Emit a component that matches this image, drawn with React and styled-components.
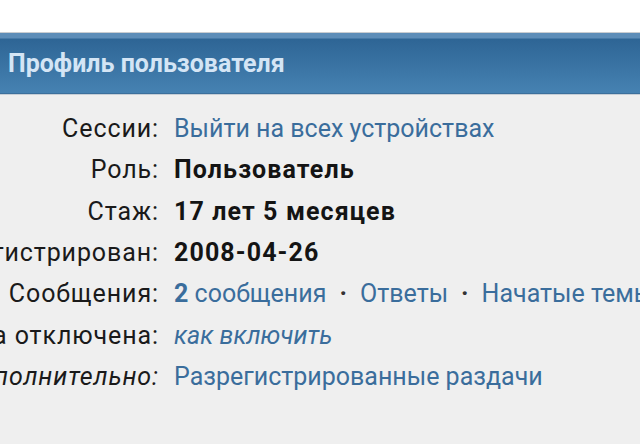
import React from "react";
import styled, { createGlobalStyle } from "styled-components";

const Global = createGlobalStyle`
  html, body {
    margin: 0;
    padding: 0;
    background: #efefef;
    overflow: hidden;
  }
  body {
    font-family: Roboto, "Noto Sans", sans-serif;
    color: #1a1a1a;
  }
`;

const Page = styled.div`
  width: 640px;
  height: 444px;
  overflow: hidden;
  background: #efefef;
`;

const TopSpace = styled.div`
  height: 32px;
  background: #ffffff;
  border-bottom: 1px solid #c9cdd1;
`;

const Header = styled.div`
  height: 60px;
  display: flex;
  align-items: center;
  padding-left: 8px;
  background: linear-gradient(
    to bottom,
    #5d8db8 0px,
    #5d8db8 5px,
    #2e6595 6px,
    #4682b2 100%
  );
  border-bottom: 1px solid #3b6f9c;
  box-shadow: 0 1px 0 #c6ced6;
  font-size: 25px;
  font-weight: 700;
  color: #d4e5f5;
`;

const Table = styled.div`
  display: grid;
  grid-template-columns: 159px 1fr;
  column-gap: 15px;
  padding-top: 14px;
`;

const Label = styled.div`
  display: flex;
  justify-content: flex-end;
  white-space: nowrap;
  height: 41.3px;
  align-items: center;
  font-size: 25px;
  letter-spacing: 0.9px;
  color: #1a1a1a;
  font-style: ${(p) => (p.$italic ? "italic" : "normal")};
`;

const Value = styled.div`
  display: flex;
  align-items: center;
  white-space: nowrap;
  height: 41.3px;
  font-size: 25px;
  font-weight: ${(p) => (p.$bold ? 700 : 400)};
  letter-spacing: ${(p) => (p.$bold ? "1.1px" : "0")};
  color: #141414;
`;

const Link = styled.span`
  color: #3a6d9c;
  font-style: ${(p) => (p.$italic ? "italic" : "normal")};
  b {
    font-weight: 700;
  }
`;

const Dot = styled.span`
  color: #333;
  font-weight: 700;
  padding: 0 13px;
`;

export default function App() {
  return (
    <Page>
      <Global />
      <TopSpace />
      <Header>Профиль пользователя</Header>
      <Table>
        <Label>Сессии:</Label>
        <Value>
          <Link>Выйти на всех устройствах</Link>
        </Value>

        <Label>Роль:</Label>
        <Value $bold>Пользователь</Value>

        <Label>Стаж:</Label>
        <Value $bold>17 лет 5 месяцев</Value>

        <Label>Зарегистрирован:</Label>
        <Value $bold>2008-04-26</Value>

        <Label>Сообщения:</Label>
        <Value>
          <Link>
            <b>2</b> сообщения
          </Link>
          <Dot>·</Dot>
          <Link>Ответы</Link>
          <Dot>·</Dot>
          <Link>Начатые темы</Link>
        </Value>

        <Label>Реклама отключена:</Label>
        <Value>
          <Link $italic>как включить</Link>
        </Value>

        <Label $italic>Дополнительно:</Label>
        <Value>
          <Link>Разрегистрированные раздачи</Link>
        </Value>
      </Table>
    </Page>
  );
}
